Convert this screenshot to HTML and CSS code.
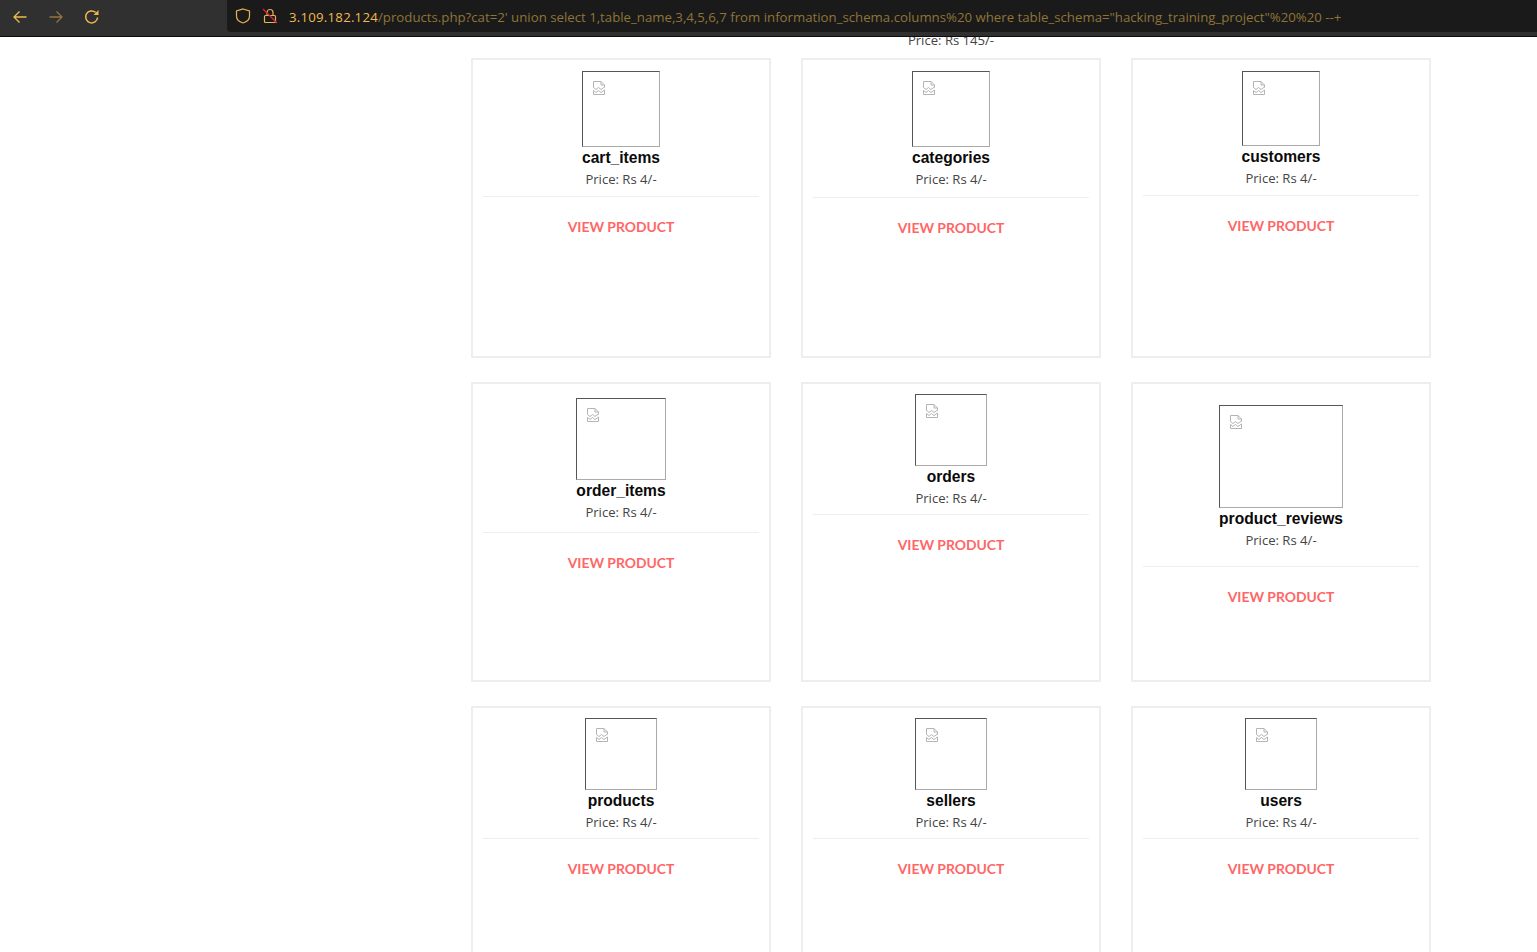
FILE: index.html
```html
<!DOCTYPE html>
<html lang="en">
<head>
    <meta charset="UTF-8">
    <meta name="viewport" content="width=device-width, initial-scale=1.0">
    <title>Products</title>
    <link rel="stylesheet" href="styles.css">
</head>
<body>
    <svg class="sprite" width="0" height="0">
        <symbol id="broken" viewBox="0 0 16 16">
            <path d="M2.500 7.500V1.500h7.500l3.500 3.500v2.500M10 1.500V5h3.500" fill="none" stroke="#b4b4b4"/>
            <path d="M2.500 7.500l2.500 2 2.500-2 2.500 2 3.500-2.500" fill="none" stroke="#b4b4b4"/>
            <path d="M2.500 10.500l2.500 2 2.500-2 2.500 2 3.500-2.500M2.500 10.500v4h11v-4.500" fill="none" stroke="#b4b4b4"/>
        </symbol>
    </svg>

    <header class="toolbar">
        <nav class="nav-icons">
            <svg class="icon" viewBox="0 0 16 16"><path d="M14.500 8H2M7.500 2.500L2 8l5.500 5.500" fill="none" stroke="#f0b94f" stroke-width="1.300"/></svg>
            <svg class="icon dim" viewBox="0 0 16 16"><path d="M1.500 8H14M8.500 2.500L14 8l-5.500 5.500" fill="none" stroke="#f0b94f" stroke-width="1.300"/></svg>
            <svg class="icon" viewBox="0 0 16 16"><path d="M13.600 8.500a6 6 0 1 1-2-5.100" fill="none" stroke="#f0b94f" stroke-width="1.500"/><path d="M14.500 1v5h-5z" fill="#f0b94f"/></svg>
        </nav>
        <div class="urlbar">
            <svg class="shield" viewBox="0 0 16 16"><path d="M8 1l6.500 2v5c0 3.500-3 6-6.500 7-3.500-1-6.500-3.500-6.500-7V3z" fill="none" stroke="#e5b350" stroke-width="1.200"/></svg>
            <svg class="lock" viewBox="0 0 16 16"><rect x="2.500" y="7.500" width="11" height="7" rx="1" fill="none" stroke="#e5b350" stroke-width="1.200"/><path d="M5 7.500V4.500a3 3 0 0 1 6 0v3" fill="none" stroke="#e5b350" stroke-width="1.200"/><path d="M1 1l14 14" stroke="#e0223c" stroke-width="1.300"/></svg>
            <span class="url"><span class="host">3.109.182.124</span>/products.php?cat=2' union select 1,table_name,3,4,5,6,7 from information_schema.columns%20 where table_schema="hacking_training_project"%20%20 --+</span>
        </div>
    </header>

    <main class="content">
        <p class="price cut-off">Price: Rs 145/-</p>

        <section class="product-grid">
            <article class="card">
                <div class="head">
                    <div class="thumb h-76"><svg class="broken"><use href="#broken"/></svg></div>
                    <h3 class="name">cart_items</h3>
                    <p class="price">Price: Rs 4/-</p>
                </div>
                <div class="rule"></div>
                <a class="view" href="#">VIEW PRODUCT</a>
            </article>
            <article class="card">
                <div class="head">
                    <div class="thumb h-76"><svg class="broken"><use href="#broken"/></svg></div>
                    <h3 class="name">categories</h3>
                    <p class="price">Price: Rs 4/-</p>
                </div>
                <div class="rule gap-8"></div>
                <a class="view" href="#">VIEW PRODUCT</a>
            </article>
            <article class="card">
                <div class="head">
                    <div class="thumb h-75"><svg class="broken"><use href="#broken"/></svg></div>
                    <h3 class="name">customers</h3>
                    <p class="price">Price: Rs 4/-</p>
                </div>
                <div class="rule"></div>
                <a class="view" href="#">VIEW PRODUCT</a>
            </article>

            <article class="card">
                <div class="head top-14">
                    <div class="thumb h-82"><svg class="broken"><use href="#broken"/></svg></div>
                    <h3 class="name">order_items</h3>
                    <p class="price">Price: Rs 4/-</p>
                </div>
                <div class="rule gap-10"></div>
                <a class="view" href="#">VIEW PRODUCT</a>
            </article>
            <article class="card">
                <div class="head top-10">
                    <div class="thumb h-72"><svg class="broken"><use href="#broken"/></svg></div>
                    <h3 class="name">orders</h3>
                    <p class="price">Price: Rs 4/-</p>
                </div>
                <div class="rule gap-6"></div>
                <a class="view" href="#">VIEW PRODUCT</a>
            </article>
            <article class="card">
                <div class="head top-21">
                    <div class="thumb h-103"><svg class="broken"><use href="#broken"/></svg></div>
                    <h3 class="name">product_reviews</h3>
                    <p class="price">Price: Rs 4/-</p>
                </div>
                <div class="rule gap-16"></div>
                <a class="view" href="#">VIEW PRODUCT</a>
            </article>

            <article class="card">
                <div class="head top-10">
                    <div class="thumb h-72"><svg class="broken"><use href="#broken"/></svg></div>
                    <h3 class="name">products</h3>
                    <p class="price">Price: Rs 4/-</p>
                </div>
                <div class="rule gap-6"></div>
                <a class="view" href="#">VIEW PRODUCT</a>
            </article>
            <article class="card">
                <div class="head top-10">
                    <div class="thumb h-72"><svg class="broken"><use href="#broken"/></svg></div>
                    <h3 class="name">sellers</h3>
                    <p class="price">Price: Rs 4/-</p>
                </div>
                <div class="rule gap-6"></div>
                <a class="view" href="#">VIEW PRODUCT</a>
            </article>
            <article class="card">
                <div class="head top-10">
                    <div class="thumb h-72"><svg class="broken"><use href="#broken"/></svg></div>
                    <h3 class="name">users</h3>
                    <p class="price">Price: Rs 4/-</p>
                </div>
                <div class="rule gap-6"></div>
                <a class="view" href="#">VIEW PRODUCT</a>
            </article>
        </section>
    </main>
</body>
</html>
```

FILE: styles.css
```css
html, body {
    margin: 0;
    padding: 0;
    height: 952px;
    overflow: hidden;
    background-color: #fff;
}

body {
    font-family: "Liberation Sans", Arial, sans-serif;
    color: #333;
}

.sprite {
    position: absolute;
}

.toolbar {
    position: relative;
    z-index: 2;
    display: flex;
    height: 36px;
    background-color: #303030;
    border-bottom: 1px solid #0c0c0c;
}

.nav-icons {
    display: flex;
    align-items: center;
    gap: 20px;
    width: 227px;
    height: 33px;
    padding-left: 12px;
    box-sizing: border-box;
}

.icon {
    width: 16px;
    height: 16px;
}

.icon.dim {
    opacity: 0.5;
}

.urlbar {
    flex: 1;
    display: flex;
    align-items: center;
    height: 32px;
    background-color: #1a1a1a;
    border-radius: 0 0 0 4px;
}

.shield {
    width: 16px;
    height: 16px;
    margin-left: 8px;
}

.lock {
    width: 16px;
    height: 16px;
    margin-left: 11px;
}

.url {
    margin-left: 11px;
    padding-top: 2px;
    font-family: "Open Sans", sans-serif;
    font-size: 13.23px;
    white-space: nowrap;
    color: #8f7438;
}

.host {
    color: #f0b94f;
    letter-spacing: 0.23px;
}

.content {
    padding-left: 471px;
    width: 960px;
}

.product-grid {
    display: grid;
    grid-template-columns: repeat(3, 300px);
    column-gap: 30px;
    row-gap: 24px;
    margin-top: 8px;
}

.card {
    box-sizing: border-box;
    height: 300px;
    padding: 0 10px;
    border: 2px solid #eee;
    background-color: #fff;
}

.head {
    width: fit-content;
    min-width: 72px;
    margin: 0 auto;
    padding-top: 11px;
}

.head.top-10 { padding-top: 10px; }
.head.top-14 { padding-top: 14px; }
.head.top-21 { padding-top: 21px; }

.thumb {
    box-sizing: border-box;
    border: 1px solid;
    border-color: #555 #aaa #aaa #555;
}

.broken {
    display: block;
    width: 16px;
    height: 16px;
    margin: 8px 0 0 8px;
}

.h-72 { height: 72px; }
.h-75 { height: 75px; }
.h-76 { height: 76px; }
.h-82 { height: 82px; }
.h-103 { height: 103px; }

.name {
    margin: 0;
    font-size: 15.6px;
    line-height: 22px;
    font-weight: bold;
    color: #0a0a0a;
    text-align: center;
}

.price {
    margin: 0;
    font-family: "Open Sans", sans-serif;
    font-size: 13.1px;
    line-height: 20px;
    color: #444;
    text-align: center;
    white-space: nowrap;
}

.cut-off {
    margin-top: -7px;
    width: 960px;
}

.rule {
    height: 1px;
    margin-top: 7px;
    background-color: #eee;
}

.rule.gap-6 { margin-top: 6px; }
.rule.gap-8 { margin-top: 8px; }
.rule.gap-10 { margin-top: 10px; }
.rule.gap-16 { margin-top: 16px; }

.view {
    display: block;
    margin-top: 20px;
    font-family: Lato, sans-serif;
    font-size: 13.9px;
    line-height: 20px;
    font-weight: bold;
    color: #ff6666;
    text-align: center;
    text-decoration: none;
}
```
